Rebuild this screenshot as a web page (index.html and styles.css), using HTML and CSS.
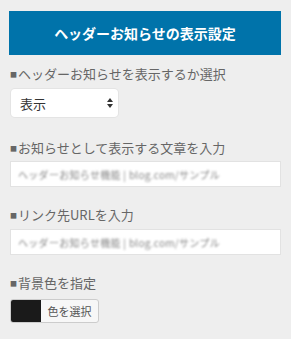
FILE: index.html
```html
<!DOCTYPE html>
<html lang="ja">
<head>
<meta charset="utf-8">
<link rel="stylesheet" href="styles.css">
</head>
<body>
<div class="panel">
  <div class="title">ヘッダーお知らせの表示設定</div>
  <div class="field field-first">
    <div class="label"><span class="bullet">■</span>ヘッダーお知らせを表示するか選択</div>
    <div class="select">
      <span>表示</span>
      <svg class="arrows" width="6" height="10" viewBox="0 0 6 10"><path d="M3 0 L6 4 H0 Z M3 10 L6 6 H0 Z" fill="#333"/></svg>
    </div>
  </div>
  <div class="field field-text">
    <div class="label"><span class="bullet">■</span>お知らせとして表示する文章を入力</div>
    <div class="input"><span class="blur">ヘッダーお知らせ機能 | blog.com/サンプル</span></div>
  </div>
  <div class="field field-url">
    <div class="label"><span class="bullet">■</span>リンク先URLを入力</div>
    <div class="input"><span class="blur">ヘッダーお知らせ機能 | blog.com/サンプル</span></div>
  </div>
  <div class="field field-color">
    <div class="label"><span class="bullet">■</span>背景色を指定</div>
    <div class="colorbtn"><span class="swatch"></span><span class="colortext">色を選択</span></div>
  </div>
</div>
</body>
</html>
```

FILE: styles.css
```css
html, body {
  margin: 0;
  padding: 0;
  background: #eeeeee;
}
body {
  font-family: "Noto Sans CJK JP", "Noto Sans", "Liberation Sans", sans-serif;
  color: #555;
}
.panel {
  padding: 11px 10px 0 9px;
}
.title {
  height: 44px;
  background: #0073aa;
  color: #fff;
  font-weight: bold;
  font-size: 14px;
  display: flex;
  align-items: center;
  justify-content: center;
}
.label {
  font-size: 13px;
  line-height: 20px;
  color: #666;
  display: flex;
  align-items: center;
}
.bullet {
  font-size: 7px;
  margin-right: 1px;
  margin-left: 1px;
}
.field-first { margin-top: 9px; }
.field-text { margin-top: 21px; }
.field-url { margin-top: 18px; }
.field-color { margin-top: 18px; }
.select {
  margin-top: 5px;
  margin-left: 2px;
  width: 107px;
  height: 28px;
  box-sizing: border-box;
  background: #fff;
  border-radius: 4px;
  box-shadow: 0 0 0 1px #e4e4e4;
  display: flex;
  align-items: center;
  justify-content: space-between;
  padding: 0 5px 0 9px;
  font-size: 13px;
  color: #333;
}
.input {
  margin-top: 3px;
  margin-left: 1px;
  height: 26px;
  box-sizing: border-box;
  background: #fff;
  border: 1px solid #e2e2e2;
  display: flex;
  align-items: center;
  padding-left: 7px;
  overflow: hidden;
}
.field-url .input { margin-top: 4px; }
.blur {
  font-size: 10px;
  color: #888;
  filter: blur(1px);
  white-space: nowrap;
  letter-spacing: 0.3px;
}
.colorbtn {
  margin-top: 6px;
  margin-left: 1px;
  width: 89px;
  height: 24px;
  box-sizing: border-box;
  display: flex;
  border: 1px solid #ccc;
  border-radius: 3px;
  overflow: hidden;
  background: #f7f7f7;
}
.swatch {
  width: 30px;
  background: #1a1a1a;
}
.colortext {
  flex: 1;
  display: flex;
  align-items: center;
  justify-content: center;
  font-size: 11px;
  color: #555;
}
```
